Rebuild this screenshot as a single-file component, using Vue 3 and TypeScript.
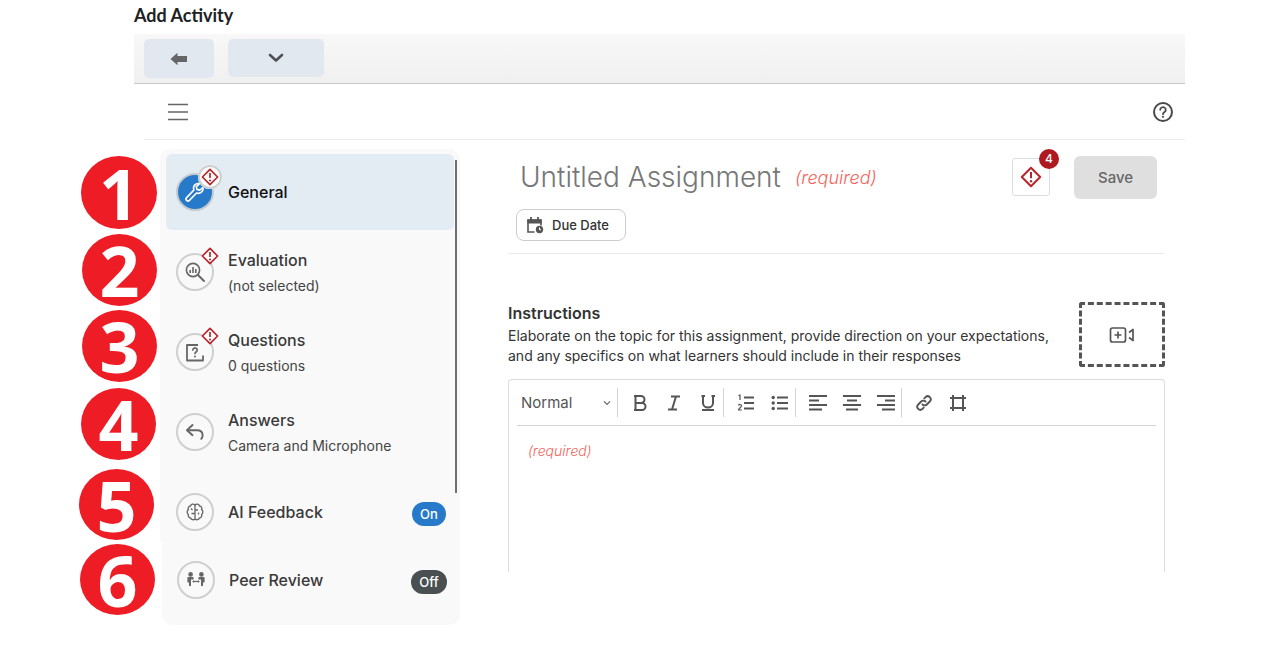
<script setup lang="ts">
type NavItem = {
  id: string;
  label: string;
  sub?: string;
  warn?: boolean;
  active?: boolean;
  pill?: "On" | "Off";
};

const topItems: NavItem[] = [
  { id: "general", label: "General", warn: true, active: true },
  { id: "evaluation", label: "Evaluation", sub: "(not selected)", warn: true },
  { id: "questions", label: "Questions", sub: "0 questions", warn: true },
  { id: "answers", label: "Answers", sub: "Camera and Microphone" },
  { id: "ai", label: "AI Feedback", pill: "On" },
];

const peerItem: NavItem = { id: "peer", label: "Peer Review", pill: "Off" };

// annotation discs laid over the screenshot
const markers = [
  { n: 1, x: 81, y: 156, w: 76, h: 73 },
  { n: 2, x: 82, y: 234, w: 75, h: 72 },
  { n: 3, x: 82, y: 310, w: 75, h: 72 },
  { n: 4, x: 81, y: 388, w: 75, h: 72 },
  { n: 5, x: 79, y: 469, w: 75, h: 71 },
  { n: 6, x: 80, y: 544, w: 75, h: 71 },
];
</script>

<template>
  <div class="page">
    <h1 class="page-title">Add Activity</h1>

    <div class="top-bar">
      <button class="bar-btn back" aria-label="Back">
        <svg width="18" height="14" viewBox="0 0 18 14"><path d="M0.5 7 7.5 0.8V4H17V10H7.5V13.2Z" fill="#666" /></svg>
      </button>
      <button class="bar-btn more" aria-label="More">
        <svg width="16" height="10" viewBox="0 0 16 10"><path d="M2 2l6 5.5L14 2" fill="none" stroke="#4d5155" stroke-width="2.6" stroke-linecap="round" stroke-linejoin="round" /></svg>
      </button>
    </div>

    <div class="menu-row">
      <svg class="burger" width="20" height="18" viewBox="0 0 20 18"><path d="M0 1.5h20M0 9h20M0 16.5h20" stroke="#666" stroke-width="1.5" /></svg>
      <svg class="help" width="22" height="22" viewBox="0 0 22 22">
        <circle cx="11" cy="11" r="9" fill="none" stroke="#4a4a4a" stroke-width="2" />
        <path d="M8.2 8.8a2.8 2.6 0 1 1 4.3 2.2c-1 .6-1.5 1-1.5 2.2" fill="none" stroke="#4a4a4a" stroke-width="1.8" stroke-linecap="round" />
        <circle cx="11" cy="15.8" r="1.1" fill="#4a4a4a" />
      </svg>
    </div>

    <div class="content">
      <aside class="side">
        <div class="side-top">
          <div
            v-for="item in topItems"
            :key="item.id"
            :class="['nav-row', item.id, { active: item.active }]"
          >
            <span class="nav-icon">
              <svg v-if="item.id === 'general'" width="24" height="24" viewBox="0 0 24 24" fill="none" stroke="#fff" stroke-width="1.6" stroke-linejoin="round">
                <path d="M3.6 20.4a2 2 0 0 0 2.8 0l7.2-7.4c2.2.7 4.3.1 5.5-1.4 1-1.2 1.2-2.7.8-4.1l-3.2 2.6-2.8-.7-.6-2.8 3-2.8c-1.6-.5-3.3-.1-4.5 1.1-1.2 1.3-1.6 3.2-1 5.2L3.6 17.6a2 2 0 0 0 0 2.8Z" />
              </svg>
              <svg v-else-if="item.id === 'evaluation'" width="22" height="22" viewBox="0 0 22 22" fill="none" stroke="#666">
                <circle cx="9" cy="9" r="6.6" stroke-width="1.6" />
                <path d="M14 14l6 6" stroke-width="2" stroke-linecap="round" />
                <path d="M6.2 12V9M9 12V6M11.8 12V8" stroke-width="1.6" />
              </svg>
              <svg v-else-if="item.id === 'questions'" width="20" height="20" viewBox="0 0 20 20" fill="none" stroke="#666">
                <path d="M18 13.5V18.5H2V3H13" stroke-width="1.8" stroke-linejoin="round" />
                <path d="M7.8 8a2.2 2.1 0 1 1 3.3 1.9c-.7.4-1.1.8-1.1 1.6" stroke-width="1.7" stroke-linecap="round" />
                <circle cx="10" cy="14.4" r="1" fill="#666" stroke="none" />
              </svg>
              <svg v-else-if="item.id === 'answers'" width="20" height="18" viewBox="0 0 20 18" fill="none" stroke="#666" stroke-width="1.9" stroke-linejoin="round" stroke-linecap="round">
                <path d="M7.5 2 2 7.2l5.5 5" />
                <path d="M2.4 7.2H12c3.6 0 5.6 2.2 5.6 5 0 1.5-.5 2.7-1.4 3.6" />
              </svg>
              <svg v-else width="20" height="20" viewBox="0 0 20 20" fill="none" stroke="#666" stroke-width="1.3" stroke-linejoin="round">
                <path d="M10 3C8.6 1.5 6 2 5.5 4 3.6 4.2 2.7 6 3.4 7.6 1.7 8.8 1.7 11.4 3.4 12.5 2.8 14.4 4 16 5.6 16c.6 1.9 3.2 2.3 4.4.8 1.2 1.5 3.8 1.1 4.4-.8 1.6 0 2.8-1.6 2.2-3.5 1.7-1.1 1.7-3.7 0-4.9.7-1.6-.2-3.4-2.1-3.6C14 2 11.4 1.5 10 3Z" />
                <path d="M10 3v13.8M10 8h3M10 11.5H6.5M6 6.5l1.5 1.5M13.5 12.5v-2" />
              </svg>
              <span v-if="item.warn" class="warn-mark">
                <svg width="18" height="18" viewBox="0 0 18 18">
                  <path d="M9 1.4 16.6 9 9 16.6 1.4 9Z" fill="#fff" stroke="#b8252b" stroke-width="1.7" stroke-linejoin="round" />
                  <path d="M9 5v5" stroke="#b8252b" stroke-width="1.7" />
                  <circle cx="9" cy="12.5" r="1.05" fill="#b8252b" />
                </svg>
              </span>
            </span>
            <span class="nav-text">
              <span class="nav-label">{{ item.label }}</span>
              <span v-if="item.sub" class="nav-sub">{{ item.sub }}</span>
            </span>
            <span v-if="item.pill" class="pill on">{{ item.pill }}</span>
          </div>
          <span class="scroll-thumb"></span>
        </div>
        <div class="side-bottom">
          <div class="nav-row peer">
            <span class="nav-icon">
              <svg width="20" height="18" viewBox="0 0 20 18" fill="#666">
                <circle cx="4.6" cy="3.4" r="2.3" />
                <circle cx="15.4" cy="3.4" r="2.3" />
                <path d="M1.4 7c0-.6.5-1 1-1h4.300c.5 0 .9.4.9 1v1.500H5v6.500H3v-3.500H2.200A.8.8 0 0 1 1.400 11ZM18.600 7c0-.6-.5-1-1-1h-4.300c-.5 0-.9.4-.9 1v1.500H15v6.500h2v-3.500h.8a.8.8 0 0 0 .8-.8Z" />
                <path d="M6.800 10.500h6.400" stroke="#666" stroke-width="1.200" />
                <path d="M6.400 10.500l1.600-1.400v2.800ZM13.600 10.500 12 9.100v2.800Z" />
              </svg>
            </span>
            <span class="nav-text">
              <span class="nav-label">{{ peerItem.label }}</span>
            </span>
            <span class="pill off">{{ peerItem.pill }}</span>
          </div>
        </div>
      </aside>

      <main class="main">
        <div class="head-row">
          <span class="assign-title">Untitled Assignment</span>
          <span class="assign-req">(required)</span>
          <button class="warn-btn" aria-label="Errors">
            <svg width="22" height="22" viewBox="0 0 22 22">
              <path d="M11 1.800 20.200 11 11 20.200 1.800 11Z" fill="none" stroke="#b8252b" stroke-width="2" stroke-linejoin="round" />
              <path d="M11 6v6.200" stroke="#b8252b" stroke-width="2" />
              <circle cx="11" cy="15.200" r="1.200" fill="#b8252b" />
            </svg>
            <span class="warn-count">4</span>
          </button>
          <button class="save-btn">Save</button>
        </div>

        <button class="due-btn">
          <svg width="18" height="18" viewBox="0 0 18 18" fill="none" stroke="#555">
            <path d="M8.500 16H2V4h13v5.500" stroke-width="1.600" />
            <path d="M2 4h13v3H2Z" fill="#555" stroke-width="1.200" />
            <path d="M5 1v3M12 1v3" stroke-width="1.800" />
            <circle cx="13.500" cy="13.500" r="3.700" fill="#555" stroke="none" />
            <path d="M13.500 11.500v2.200h1.600" stroke="#fff" stroke-width="1" />
          </svg>
          <span>Due Date</span>
        </button>

        <div class="divider"></div>

        <div class="instr-row">
          <div class="instr-text">
            <div class="instr-title">Instructions</div>
            <p class="instr-desc">Elaborate on the topic for this assignment, provide direction on your expectations,<br />and any specifics on what learners should include in their responses</p>
          </div>
          <div class="media-drop">
            <svg width="26" height="18" viewBox="0 0 26 18" fill="none" stroke="#555" stroke-width="1.700" stroke-linejoin="round">
              <rect x="1.500" y="2" width="15" height="14" rx="2" />
              <path d="M9 5.500v7M5.500 9h7" />
              <path d="M20 6.500 24 3.500v11l-4-3" />
            </svg>
          </div>
        </div>

        <div class="editor">
          <div class="ed-tools">
            <span class="ed-select">
              <span>Normal</span>
              <svg width="8" height="6" viewBox="0 0 8 6"><path d="M1 1.300l3 3 3-3" fill="none" stroke="#666" stroke-width="1.200" /></svg>
            </span>
            <span class="ed-sep"></span>
            <span class="ed-group">
              <svg width="18" height="18" viewBox="0 0 18 18" fill="none" stroke="#555" stroke-width="2"><path d="M3 2h7a3.500 3.500 0 0 1 0 7H4.500M4.500 9H11a3.500 3.500 0 0 1 0 7H3M4.500 2v14" /></svg>
              <svg width="18" height="18" viewBox="0 0 18 18" fill="none" stroke="#555" stroke-width="2"><path d="M6 2.500h9M3 15.500h9M11 2.500 7 15.500" /></svg>
              <svg width="18" height="18" viewBox="0 0 18 18" fill="none" stroke="#555" stroke-width="2"><path d="M4 2v7a5 4.500 0 0 0 10 0V2M2.500 2h3.500M12.500 2H16M3 16h12" /></svg>
            </span>
            <span class="ed-sep"></span>
            <span class="ed-group">
              <svg width="18" height="18" viewBox="0 0 18 18" fill="none" stroke="#555"><path d="M7 3.500h10M7 9h10M7 14.500h10" stroke-width="2" /><path d="M1.500 1.500 3 1v5M1.500 11.500c.5-1.500 3-1.300 3 .3 0 1.200-2.500 2.200-3 4.200h3.300" stroke-width="1.200" /></svg>
              <svg width="18" height="18" viewBox="0 0 18 18" fill="none" stroke="#555"><path d="M6 3.500h11M6 9h11M6 14.500h11" stroke-width="2" /><circle cx="2.200" cy="3.500" r="1.700" fill="#555" stroke="none" /><circle cx="2.200" cy="9" r="1.700" fill="#555" stroke="none" /><circle cx="2.200" cy="14.500" r="1.700" fill="#555" stroke="none" /></svg>
            </span>
            <span class="ed-sep"></span>
            <span class="ed-group">
              <svg width="18" height="18" viewBox="0 0 18 18" fill="none" stroke="#555" stroke-width="2"><path d="M0 2h18M0 6.500h10M0 11h18M0 15.500h13" /></svg>
              <svg width="18" height="18" viewBox="0 0 18 18" fill="none" stroke="#555" stroke-width="2"><path d="M0 2h18M4 6.500h10M0 11h18M3 15.500h12" /></svg>
              <svg width="18" height="18" viewBox="0 0 18 18" fill="none" stroke="#555" stroke-width="2"><path d="M0 2h18M8 6.500h10M0 11h18M5 15.500h13" /></svg>
            </span>
            <span class="ed-sep"></span>
            <span class="ed-group">
              <svg width="18" height="18" viewBox="0 0 18 18" fill="none" stroke="#555" stroke-width="1.900" stroke-linecap="round"><path d="M7.500 10.500a3 3 0 0 0 4.300 0l3-3a3 3 0 0 0-4.300-4.300l-1.200 1.200" /><path d="M10.500 7.500a3 3 0 0 0-4.300 0l-3 3a3 3 0 0 0 4.300 4.300l1.200-1.200" /></svg>
              <svg width="18" height="18" viewBox="0 0 18 18" fill="none" stroke="#555" stroke-width="2"><path d="M4 1v16M14 1v16M1 4h16M1 14h16" /></svg>
            </span>
          </div>
          <div class="ed-body">(required)</div>
        </div>
      </main>
    </div>

    <span
      v-for="m in markers"
      :key="m.n"
      class="marker"
      :style="{ left: m.x + 'px', top: m.y + 'px', width: m.w + 'px', height: m.h + 'px' }"
    >{{ m.n }}</span>
  </div>
</template>

<style scoped>
.page {
  position: relative;
  width: 1278px;
  height: 651px;
  overflow: hidden;
  background: #fff;
  font-family: Inter, "Liberation Sans", sans-serif;
  color: #333;
}

.page-title {
  margin: 0;
  height: 34px;
  padding: 4px 0 0 134px;
  box-sizing: border-box;
  font-family: Lato, "Liberation Sans", sans-serif;
  font-size: 18px;
  line-height: 22px;
  font-weight: 700;
  color: #202122;
}

.top-bar {
  display: flex;
  align-items: flex-start;
  gap: 14px;
  width: 1051px;
  height: 50px;
  box-sizing: border-box;
  margin-left: 134px;
  padding: 5px 0 0 10px;
  background: linear-gradient(#f8f8f8, #f0f0f0);
  border-bottom: 1px solid #c9c9c9;
}

.bar-btn {
  display: flex;
  align-items: center;
  justify-content: center;
  padding: 0;
  border: 0;
  border-radius: 5px;
  background: #e2e8f0;
}

.bar-btn.back {
  width: 70px;
  height: 39px;
}

.bar-btn.more {
  width: 96px;
  height: 38px;
}

.menu-row {
  display: flex;
  align-items: center;
  justify-content: space-between;
  width: 1041px;
  height: 56px;
  box-sizing: border-box;
  margin-left: 144px;
  padding: 0 11px 0 24px;
  border-bottom: 1px solid #ececec;
}

.content {
  display: flex;
  align-items: flex-start;
  margin-left: 160px;
}

.side {
  width: 300px;
  margin-top: 9px;
  flex: none;
}

.side-top {
  position: relative;
  display: flex;
  flex-direction: column;
  gap: 4px;
  height: 393px;
  box-sizing: border-box;
  padding: 5px 6px 0;
  background: #f9f9f9;
  border-radius: 10px 10px 0 0;
}

.side-bottom {
  margin-left: 2px;
  height: 83px;
  padding-top: 0;
  background: #f9f9f9;
  border-radius: 0 0 10px 10px;
}

.scroll-thumb {
  position: absolute;
  left: 295px;
  top: 11px;
  width: 2px;
  height: 333px;
  background: #6f6f6f;
}

.nav-row {
  display: flex;
  align-items: center;
  flex: none;
  height: 76px;
  box-sizing: border-box;
  padding: 0 8px 0 10px;
  border-radius: 6px;
}

.nav-row.active {
  background: #e3ebf3;
}

.nav-row.ai {
  height: 68px;
  padding-top: 8px;
  padding-right: 8px;
}

.nav-row.peer {
  height: 76px;
  padding: 0 13px 0 15px;
}

.nav-icon {
  position: relative;
  flex: none;
  display: flex;
  align-items: center;
  justify-content: center;
  width: 38px;
  height: 38px;
  box-sizing: border-box;
  border: 2px solid #cfcfcf;
  border-radius: 50%;
}

.active .nav-icon {
  background: #2779c9;
  border-color: #c5cad0;
}

.warn-mark {
  position: absolute;
  top: -9px;
  right: -8px;
  display: flex;
  align-items: center;
  justify-content: center;
  width: 20px;
  height: 20px;
  border-radius: 50%;
}

.active .warn-mark {
  top: -10px;
  right: -10px;
  width: 24px;
  height: 24px;
  background: #fff;
  box-shadow: 0 0 0 2px #cfcfcf inset;
}

.nav-text {
  display: flex;
  flex: 1;
  flex-direction: column;
  gap: 8px;
  margin-left: 14px;
}

.nav-label {
  font-size: 16px;
  line-height: 18px;
  font-weight: 500;
  color: #3a3a3a;
}

.active .nav-label {
  color: #111;
}

.nav-sub {
  font-size: 14px;
  line-height: 17px;
  color: #444;
}

.pill {
  display: flex;
  align-items: center;
  justify-content: center;
  height: 24px;
  border-radius: 12px;
  font-size: 13px;
  font-weight: 500;
  color: #fff;
}

.pill.on {
  width: 34px;
  margin-top: 3px;
  background: #2779c9;
}

.pill.off {
  width: 36px;
  margin-top: 3px;
  background: #4a4f52;
}

.main {
  width: 657px;
  margin: 15px 0 0 48px;
  flex: none;
}

.head-row {
  display: flex;
  align-items: center;
  height: 44px;
  padding-left: 12px;
}

.assign-title {
  font-size: 28px;
  font-weight: 300;
  color: #777;
}

.assign-req {
  margin-left: 14px;
  font-size: 18px;
  font-style: italic;
  font-weight: 300;
  color: #f4645c;
}

.warn-btn {
  position: relative;
  display: flex;
  align-items: center;
  justify-content: center;
  width: 38px;
  height: 38px;
  margin-left: auto;
  margin-top: 0;
  padding: 0;
  background: #fff;
  border: 1px solid #ddd;
  border-radius: 3px;
}

.warn-count {
  position: absolute;
  top: -10px;
  right: -10px;
  width: 20px;
  height: 20px;
  border-radius: 50%;
  background: #ae1a1f;
  color: #fff;
  font-family: Inter, sans-serif;
  font-size: 12px;
  font-weight: 500;
  line-height: 20px;
  text-align: center;
}

.save-btn {
  width: 83px;
  height: 43px;
  margin: 0 8px 0 24px;
  border: 0;
  border-radius: 6px;
  background: #dfdfdf;
  color: #666;
  font-family: Inter, sans-serif;
  font-size: 15px;
  font-weight: 500;
}

.due-btn {
  display: flex;
  align-items: center;
  gap: 8px;
  width: 110px;
  height: 32px;
  box-sizing: border-box;
  margin: 10px 0 0 8px;
  padding: 0 0 0 9px;
  background: #fff;
  border: 1px solid #ccc;
  border-radius: 8px;
  color: #333;
  font-family: Inter, sans-serif;
  font-size: 13px;
  font-weight: 500;
}

.divider {
  height: 1px;
  margin-top: 12px;
  background: #eaeaea;
}

.instr-row {
  display: flex;
  justify-content: space-between;
  margin-top: 48px;
}

.instr-text {
  padding-top: 2px;
}

.instr-title {
  font-size: 16px;
  line-height: 19px;
  font-weight: 600;
  color: #333;
}

.instr-desc {
  margin: 3px 0 0;
  font-size: 14px;
  line-height: 20px;
  color: #333;
}

.media-drop {
  display: flex;
  align-items: center;
  justify-content: center;
  width: 86px;
  height: 65px;
  box-sizing: border-box;
  border: 3px dashed #555;
  border-radius: 3px;
}

.editor {
  height: 193px;
  box-sizing: border-box;
  margin-top: 12px;
  padding: 0 8px;
  border: 1px solid #ddd;
  border-bottom: 0;
  border-radius: 4px 4px 0 0;
}

.ed-tools {
  display: flex;
  align-items: center;
  height: 45px;
  padding-left: 4px;
  border-bottom: 1px solid #d4d4d4;
}

.ed-select {
  display: flex;
  align-items: center;
  justify-content: space-between;
  width: 90px;
  font-size: 15px;
  color: #555;
}

.ed-sep {
  width: 1px;
  height: 29px;
  margin: 0 10px 0 6px;
  background: #d4d4d4;
}

.ed-group {
  display: flex;
  align-items: center;
  gap: 16px;
  padding: 0 0 0 3px;
}

.ed-body {
  padding: 16px 11px;
  font-size: 14px;
  line-height: 17px;
  font-style: italic;
  font-weight: 300;
  color: #f4645c;
}

.marker {
  position: absolute;
  display: flex;
  align-items: center;
  justify-content: center;
  border-radius: 50%;
  background: #ee1c25;
  color: #fff;
  font-family: "Open Sans", sans-serif;
  font-size: 70px;
  font-weight: 700;
  line-height: 1;
}
</style>
